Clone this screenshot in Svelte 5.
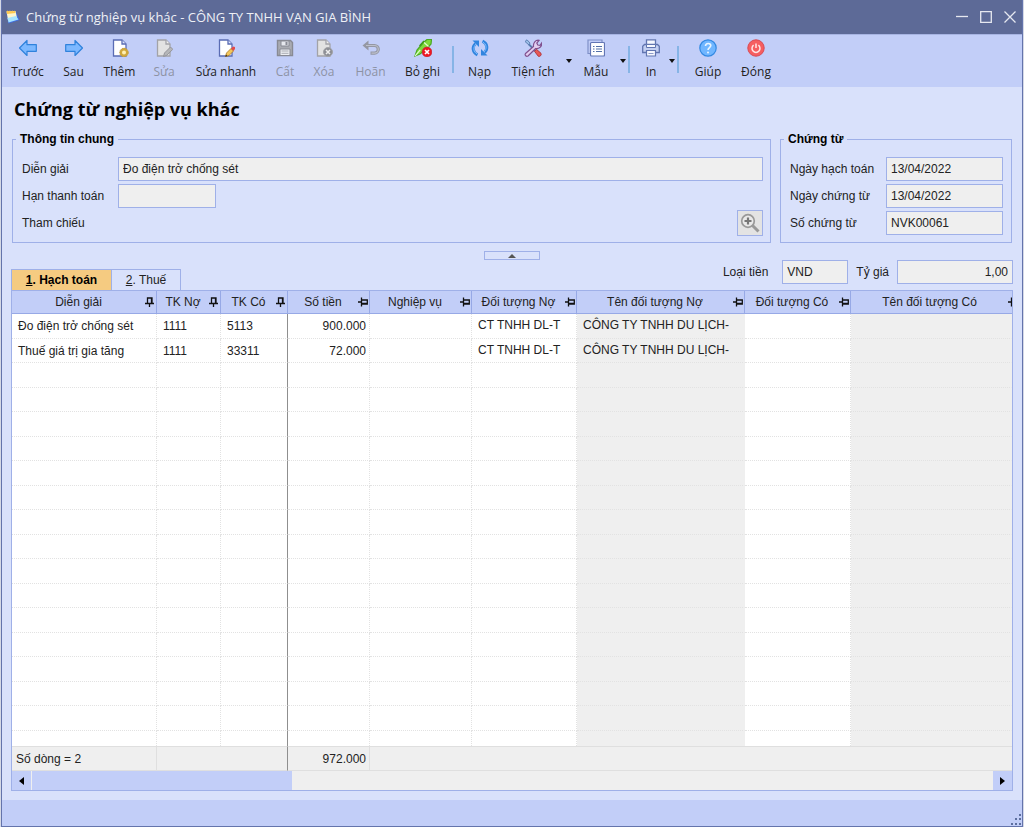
<script>
  const tools = [
    { icon: 'prev', label: 'Trước', width: 51 },
    { icon: 'next', label: 'Sau', width: 41 },
    { icon: 'add', label: 'Thêm', width: 51 },
    { icon: 'edit', label: 'Sửa', width: 38, disabled: true },
    { icon: 'quick', label: 'Sửa nhanh', width: 86 },
    { icon: 'save', label: 'Cất', width: 32, disabled: true },
    { icon: 'remove', label: 'Xóa', width: 46, disabled: true },
    { icon: 'undo', label: 'Hoãn', width: 47, disabled: true },
    { icon: 'unpost', label: 'Bỏ ghi', width: 57, divider: true },
    { icon: 'reload', label: 'Nạp', width: 43 },
    { icon: 'utility', label: 'Tiện ích', width: 64, menu: true },
    { icon: 'form', label: 'Mẫu', width: 46, menu: true, divider: true },
    { icon: 'print', label: 'In', width: 34, menu: true, divider: true },
    { icon: 'help', label: 'Giúp', width: 50 },
    { icon: 'close', label: 'Đóng', width: 46 }
  ];

  const columns = [
    { title: 'Diễn giải', width: 145, pinned: true },
    { title: 'TK Nợ', width: 64, pinned: true },
    { title: 'TK Có', width: 67, pinned: true },
    { title: 'Số tiền', width: 82 },
    { title: 'Nghiệp vụ', width: 102 },
    { title: 'Đối tượng Nợ', width: 105 },
    { title: 'Tên đối tượng Nợ', width: 168, locked: true },
    { title: 'Đối tượng Có', width: 106 },
    { title: 'Tên đối tượng Có', locked: true }
  ];

  const entries = [
    ['Đo điện trở chống sét', '1111', '5113', '900.000', '', 'CT TNHH DL-T', 'CÔNG TY TNHH DU LỊCH-', '', ''],
    ['Thuế giá trị gia tăng', '1111', '33311', '72.000', '', 'CT TNHH DL-T', 'CÔNG TY TNHH DU LỊCH-', '', '']
  ];
  const blank = columns.map(() => '');
  const rows = [...entries, ...Array.from({ length: 16 }, () => blank)];

  let tab = $state(1);
  let expanded = $state(true);
</script>

{#snippet page()}
  <path d="M2.500 1h8.500l4 4v12h-12.500z" fill="#fff" stroke="#5a6cb4" stroke-width="1.300" />
  <path d="M11 1v4h4" fill="#dfe7fb" stroke="#5a6cb4" stroke-width="1.300" />
{/snippet}

{#snippet greyPage()}
  <path d="M2.500 1h8.500l4 4v12h-12.500z" fill="#e2e2e2" stroke="#a2a3a8" stroke-width="1.300" />
  <path d="M11 1v4h4" fill="#efefef" stroke="#a2a3a8" stroke-width="1.300" />
{/snippet}

{#snippet glyph(name)}
  <svg class="glyph" viewBox="0 0 18 18" fill="none" aria-hidden="true">
    {#if name === 'prev'}
      <path d="M.5 9L8 1.500v4.200h9.300v6.600H8v4.200z" fill="#7db8ff" stroke="#2f82dc" stroke-width="1.200" stroke-linejoin="round" />
    {:else if name === 'next'}
      <path d="M17.500 9L10 1.500v4.200H.7v6.600H10v4.200z" fill="#7db8ff" stroke="#2f82dc" stroke-width="1.200" stroke-linejoin="round" />
    {:else if name === 'add'}
      {@render page()}
      <circle cx="13" cy="13.500" r="3.200" fill="#fff0b4" stroke="#d0a83c" stroke-width="2.400" />
      <circle cx="13" cy="13.500" r="4.300" stroke="#c0983a" stroke-width=".8" stroke-dasharray="1.500 1" />
    {:else if name === 'edit'}
      {@render greyPage()}
      <path d="M8.500 17.500l1-3.500 6-6 2.300 2.300-6 6z" fill="#b5b6b8" stroke="#94959a" />
    {:else if name === 'quick'}
      {@render page()}
      <path d="M8.500 17.500l1-3.500 4.500-4.500 2.500 2.500-4.500 4.500z" fill="#f3c65a" stroke="#a87724" stroke-width=".8" />
      <path d="M14 9.500l1.500-1.500a1.600 1.600 0 0 1 2.300 2.300L16.500 12z" fill="#e34b4b" />
      <path d="M8.300 17.700l.7-2.200 1.500 1.500z" fill="#3b3020" />
    {:else if name === 'save'}
      <path d="M1.500 1.500h13l2 2v13h-15z" fill="#a9abb2" stroke="#888a94" stroke-width="1.400" />
      <path d="M5 2h8v5H5z" fill="#e6e8ee" stroke="#888a94" />
      <path d="M9.500 3h2v3h-2z" fill="#888a94" />
      <path d="M4 10h10v6.500H4z" fill="#eceef2" stroke="#888a94" />
      <path d="M5.500 12h7M5.500 14.300h7" stroke="#a9abb2" />
    {:else if name === 'remove'}
      {@render greyPage()}
      <circle cx="13" cy="13" r="4.500" fill="#8d8f95" stroke="#a2a3a8" />
      <path d="M11 11l4 4M15 11l-4 4" stroke="#eee" stroke-width="1.500" />
    {:else if name === 'undo'}
      <path d="M5 6.500h7.500a3.800 3.800 0 0 1 0 7.600H8.500" stroke="#9497a3" stroke-width="3.200" />
      <path d="M6.500 1.500L.5 6.500l6 5z" fill="#9497a3" />
      <path d="M4 6.500h8.500a3.800 3.800 0 0 1 0 7.600H9.500" stroke="#bcc0cc" stroke-width="1.200" />
    {:else if name === 'unpost'}
      <path d="M1 17l2-6L9.500 3.500 13 .5h4.500l-.5 4.500-4 4.500L6 15z" fill="#7fda3c" stroke="#4aa922" stroke-width="1.200" />
      <path d="M1.200 16.800l5-6M10 3.500l4.500 4" stroke="#e0ffcc" stroke-width="1.200" />
      <path d="M5.500 7L10 2" stroke="#3d9d1c" stroke-width="1.400" />
      <circle cx="13" cy="13" r="4.900" fill="#ee1822" stroke="#bd2935" stroke-width=".6" />
      <path d="M11 11l4 4M15 11l-4 4" stroke="#fff" stroke-width="1.700" />
    {:else if name === 'reload'}
      <path d="M6.500 15.800C1.500 13.500.8 8 4.500 4.500" stroke="#3185df" stroke-width="3" />
      <path d="M1.500 1.500h6.500v6.500z" fill="#3185df" />
      <path d="M11.500 2.200c5 2.300 5.700 7.800 2 11.300" stroke="#3185df" stroke-width="3" />
      <path d="M16.500 16.500H10V10z" fill="#3185df" />
      <path d="M6.300 15C2.300 13 1.700 8.500 5 5M11.700 3c4 2 4.600 6.500 1.300 10" stroke="#7fbcff" stroke-width="1" />
    {:else if name === 'utility'}
      <path d="M4.500 5l7 7" stroke="#587aae" stroke-width="1.800" />
      <path d="M1 2.500L3 .8 6 4 5 6z" fill="#9bbde5" stroke="#587aae" stroke-width=".9" />
      <path d="M1.500 14.500L9.500 7.500C9 4 11.500.7 15 1.300L12.800 4l1 2 2.200.3 1.700-2.300c.5 3.500-2.700 6-6 5.500L4 17a1.800 1.800 0 0 1-2.500-2.500z" fill="#e2cef0" stroke="#80508f" stroke-width="1.200" />
      <path d="M10.500 12.300l2-2 4.500 4a2.200 2.200 0 0 1-2.700 3z" fill="#e85855" stroke="#ac3039" stroke-width=".9" />
    {:else if name === 'form'}
      <path d="M3.500 14.500H1V1h14v2.500" stroke="#7f90c8" stroke-width="1.200" />
      <rect x="3.500" y="3.500" width="14" height="13.500" rx="1" fill="#fff" stroke="#6376b4" stroke-width="1.200" />
      <path d="M9 7.500h6M9 10h6M9 12.500h6" stroke="#5370a8" />
      <path d="M6 7.500h1.500M6 10h1.500M6 12.500h1.500" stroke="#5370a8" stroke-width="1.200" />
    {:else if name === 'print'}
      <path d="M4.500 6V.8h9V6" fill="#f6f8ff" stroke="#6175b0" stroke-width="1.300" />
      <path d="M2.500 5.500h13l1.800 1.800v6.200H.7V7.300z" fill="#c3cff2" stroke="#6175b0" stroke-width="1.300" />
      <path d="M4.500 5.500h9v3h-9z" fill="#f6f8ff" stroke="#6175b0" />
      <path d="M4.500 11.500h9V17h-9z" fill="#f6f8ff" stroke="#6175b0" stroke-width="1.200" />
      <path d="M6.500 14.500h5" stroke="#8c9bc8" />
    {:else if name === 'help'}
      <circle cx="9" cy="9" r="8.200" fill="#70b6ff" stroke="#3389e2" stroke-width="1.200" />
      <path d="M6.500 7c0-3.300 5.300-3.300 5.300-.4C11.800 8.500 9 8.700 9 11" stroke="#e9f5ff" stroke-width="1.600" />
      <circle cx="9" cy="13.500" r="1" fill="#e9f5ff" />
    {:else}
      <circle cx="9" cy="9" r="8.200" fill="#f65e60" stroke="#d84b55" stroke-width="1" />
      <path d="M6.600 6.200a4 4 0 1 0 4.800 0M9 4.500V9" stroke="#ffe6e6" stroke-width="1.500" />
    {/if}
  </svg>
{/snippet}

<div class="window">
  <header class="titlebar">
    <svg class="logo" viewBox="0 0 14 14" aria-hidden="true">
      <path d="M.5 3l2 10.500L13.500 10 10 2z" fill="#3f6fe8" />
      <path d="M.5 1.500L9.500 1l1.500 7-9 2z" fill="#fff6cd" />
      <path d="M.5 1.500l1-1 1 1 1.500-1 1 1 1.500-1 1 1 1.500-1 .5 2.500-8.500 1z" fill="#ffc94f" />
      <path d="M1.500 8l8.500-2 2.500 3.500-10 3z" fill="#a6e4ff" />
    </svg>
    <span class="caption">Chứng từ nghiệp vụ khác - CÔNG TY TNHH VẠN GIA BÌNH</span>
    <div class="controls">
      <button aria-label="Thu nhỏ"><svg viewBox="0 0 12 12"><path d="M0 5.500h12" /></svg></button>
      <button aria-label="Phóng to"><svg viewBox="0 0 12 12"><path d="M.7.7h10.600v10.600H.7z" /></svg></button>
      <button aria-label="Đóng cửa sổ"><svg viewBox="0 0 12 12"><path d="M.5.5l11 11M11.500.5l-11 11" /></svg></button>
    </div>
  </header>

  <nav class="toolbar">
    {#each tools as tool}
      <button class="tool" disabled={tool.disabled} style:width="{tool.width}px">
        {@render glyph(tool.icon)}
        <span>{tool.label}</span>
      </button>
      {#if tool.menu}
        <button class="drop" aria-label="{tool.label}: thêm lựa chọn"><i class="tri down"></i></button>
      {/if}
      {#if tool.divider}<i class="divider"></i>{/if}
    {/each}
  </nav>

  <main>
    <h1>Chứng từ nghiệp vụ khác</h1>

    {#if expanded}
      <div class="groups">
        <fieldset class="general">
          <legend>Thông tin chung</legend>
          <div class="fields">
            <label for="desc">Diễn giải</label>
            <input id="desc" value="Đo điện trở chống sét" readonly />
            <label for="due">Hạn thanh toán</label>
            <input id="due" class="short" value="" readonly />
            <span>Tham chiếu</span>
            <button class="lookup" aria-label="Tham chiếu">
              <svg viewBox="0 0 20 20" fill="none">
                <path d="M12 12l6.500 6.500" stroke="#999" stroke-width="3" />
                <circle cx="8" cy="8" r="6.300" fill="#e9e9e9" stroke="#999" stroke-width="1.700" />
                <path d="M8 4.500v7M4.500 8h7" stroke="#777" stroke-width="2.200" />
              </svg>
            </button>
          </div>
        </fieldset>
        <fieldset class="voucher">
          <legend>Chứng từ</legend>
          <div class="fields">
            <label for="posted">Ngày hạch toán</label>
            <input id="posted" value="13/04/2022" readonly />
            <label for="dated">Ngày chứng từ</label>
            <input id="dated" value="13/04/2022" readonly />
            <label for="number">Số chứng từ</label>
            <input id="number" value="NVK00061" readonly />
          </div>
        </fieldset>
      </div>
    {/if}

    <button class="collapse" aria-label="Thu gọn" onclick={() => (expanded = !expanded)}><i class="tri up"></i></button>

    <div class="strip">
      <div class="tabs" role="tablist">
        <button role="tab" class:active={tab === 1} aria-selected={tab === 1} onclick={() => (tab = 1)}><u>1</u>. Hạch toán</button>
        <button role="tab" class:active={tab === 2} aria-selected={tab === 2} onclick={() => (tab = 2)}><u>2</u>. Thuế</button>
      </div>
      <div class="currency">
        <label for="currency">Loại tiền</label>
        <input id="currency" class="code" value="VND" readonly />
        <label for="rate">Tỷ giá</label>
        <input id="rate" class="rate" value="1,00" readonly />
      </div>
    </div>

    <div class="grid">
      <table>
        <colgroup>
          {#each columns as column}
            <col style:width={column.width ? `${column.width}px` : 'auto'} />
          {/each}
        </colgroup>
        <thead>
          <tr>
            {#each columns as column}
              <th scope="col">
                <div class="head">
                  <span>{column.title}</span>
                  {#if column.pinned}
                    <svg class="pin" viewBox="0 0 10 10"><path d="M2.500 6V1h4.500v5M0 6.500h9M4.500 7v3M6.500 1v5" /></svg>
                  {:else}
                    <svg class="pin" viewBox="0 0 10 10"><path d="M4 3h5.300v4H4M3.500 .5v9M0 5h3M4 6.500h5" /></svg>
                  {/if}
                </div>
              </th>
            {/each}
          </tr>
        </thead>
        <tbody>
          {#each rows as row}
            <tr>
              {#each row as cell, i}
                <td class:locked={columns[i].locked} class:frozen={i === 2} class:amount={i === 3} class:party={i > 4}>{cell}</td>
              {/each}
            </tr>
          {/each}
        </tbody>
        <tfoot>
          <tr>
            <td>Số dòng = 2</td>
            <td class="frozen" colspan="2"></td>
            <td class="amount">972.000</td>
            <td class="rest" colspan="5"></td>
          </tr>
        </tfoot>
      </table>
      <div class="scroll">
        <button aria-label="Cuộn trái"><i class="tri left"></i></button>
        <div class="thumb"></div>
        <button class="end" aria-label="Cuộn phải"><i class="tri right"></i></button>
      </div>
    </div>
  </main>

  <footer class="status">
    <svg viewBox="0 0 12 12" fill="#5d6f9f" aria-hidden="true">
      <path d="M9 0h2v2H9zM5 4h2v2H5zM9 4h2v2H9zM1 9h2v2H1zM5 9h2v2H5zM9 9h2v2H9z" />
    </svg>
  </footer>
</div>

<style>
  :global(body) {
    margin: 0;
    background: #d5d9e6;
  }
  .window, .window * {
    box-sizing: border-box;
  }
  .window {
    display: flex;
    flex-direction: column;
    min-height: 100vh;
    margin: 0 1px;
    border: 1px solid #6474ac;
    border-top: 0;
    background: #d9e1fb;
    color: #222;
    font: 12px/16px "Liberation Sans", Arial, sans-serif;
  }
  button {
    margin: 0;
    padding: 0;
    border: 0;
    background: none;
    color: inherit;
    font: inherit;
  }
  .titlebar {
    display: flex;
    align-items: center;
    gap: 6px;
    height: 34px;
    padding: 0 6px 0 4px;
    background: #5d6a97;
    color: #eef0f6;
    font-family: "Open Sans", "Noto Sans", sans-serif;
    font-size: 13px;
  }
  .logo {
    width: 14px;
    height: 14px;
  }
  .controls {
    display: flex;
    gap: 12px;
    margin-left: auto;
  }
  .controls button, .controls svg {
    display: block;
    width: 12px;
    height: 12px;
  }
  .controls svg {
    fill: none;
    stroke: #e6e8f0;
    stroke-width: 1.3;
  }
  .toolbar {
    display: flex;
    height: 53px;
    padding-top: 4px;
    background: #c2cef8;
    border-top: 1px solid #a7b4e2;
    font-family: "Open Sans", "Noto Sans", sans-serif;
  }
  .tool {
    display: flex;
    flex: none;
    flex-direction: column;
    align-items: center;
    gap: 7px;
    white-space: nowrap;
  }
  .tool:disabled {
    color: #8d92a4;
  }
  .glyph {
    width: 18px;
    height: 18px;
  }
  .drop {
    display: flex;
    justify-content: center;
    width: 8px;
    padding-top: 20px;
  }
  .divider {
    width: 2px;
    height: 27px;
    margin: 7px 4px 0 1px;
    background: #86b4e6;
  }
  .tri {
    width: 0;
    height: 0;
    border: 0 solid transparent;
  }
  .down {
    height: 4px;
    border-width: 4px 3px 0;
    border-top-color: #111;
  }
  .up {
    border-width: 0 4px 4px;
    border-bottom-color: #555;
  }
  .left {
    border-width: 4px 5px 4px 0;
    border-right-color: #000;
  }
  .right {
    border-width: 4px 0 4px 5px;
    border-left-color: #000;
  }
  main {
    display: flex;
    flex-direction: column;
    padding: 0 9px 9px;
  }
  h1 {
    margin: 0 3px;
    color: #000;
    font: bold 18px/44px "Open Sans", "Noto Sans", sans-serif;
  }
  .groups {
    display: flex;
    gap: 9px;
    padding: 0 1px;
  }
  fieldset {
    min-width: 0;
    margin: 0;
    padding: 10px 8px 7px 9px;
    border: 1px solid #9fb0e8;
  }
  legend {
    margin-left: -6px;
    padding: 0 4px;
    color: #000;
    font-weight: bold;
  }
  .general {
    flex: 1;
    padding-right: 7px;
  }
  .voucher {
    width: 232px;
  }
  .fields {
    display: grid;
    grid-template-columns: 96px 1fr;
    grid-auto-rows: 24px;
    row-gap: 3px;
    align-items: center;
  }
  input {
    width: 100%;
    height: 24px;
    padding: 0 4px;
    border: 1px solid #9fb0e8;
    border-radius: 0;
    background: #efefef;
    color: #222;
    font: inherit;
    outline: 0;
  }
  .short {
    width: 98px;
  }
  .lookup {
    justify-self: end;
    display: grid;
    place-items: center;
    width: 26px;
    height: 26px;
    border: 1px solid #9fb0e8;
    background: #e3e3e3;
  }
  .lookup svg {
    width: 20px;
    height: 20px;
  }
  .collapse {
    display: flex;
    align-items: center;
    justify-content: center;
    align-self: center;
    width: 56px;
    height: 9px;
    margin-top: 8px;
    border: 1px solid #9fb0e8;
  }
  .strip {
    display: flex;
    align-items: flex-start;
    justify-content: space-between;
    height: 30px;
  }
  .tabs {
    display: flex;
    align-self: flex-end;
  }
  .tabs button {
    width: 70px;
    height: 21px;
    border: 1px solid #9fb0e8;
    border-bottom: 0;
  }
  .tabs .active {
    width: 100px;
    border-right: 0;
    background: #f5cb81;
    color: #000;
    font-weight: bold;
  }
  .currency {
    display: flex;
    align-items: center;
    gap: 8px;
  }
  .code {
    width: 66px;
    margin-left: 6px;
  }
  .rate {
    width: 116px;
    text-align: right;
  }
  .grid {
    border: 1px solid #9fb0e8;
    background: #efefef;
  }
  table {
    width: 100%;
    table-layout: fixed;
    border-spacing: 0;
  }
  th {
    height: 23px;
    padding: 0;
    border-right: 1px solid #97a9e6;
    border-bottom: 1px solid #97a9e6;
    background: #c2cef8;
    font-weight: normal;
    overflow: hidden;
  }
  th:last-child {
    border-right: 0;
  }
  .head {
    display: flex;
    align-items: center;
    padding-right: 1px;
    white-space: nowrap;
  }
  th:last-child .head {
    margin-right: -7px;
  }
  .head span {
    flex: 1;
    text-align: center;
  }
  .pin {
    flex: none;
    width: 10px;
    height: 10px;
    fill: none;
    stroke: #111;
    stroke-width: 1.3;
  }
  td {
    padding: 0 6px;
    border-right: 1px dotted #e2e2e2;
    border-bottom: 1px dotted #e2e2e2;
    white-space: nowrap;
    overflow: hidden;
  }
  tbody td {
    height: 24px;
    background: #fff;
  }
  tbody tr:nth-child(odd) td {
    height: 25px;
  }
  tbody tr:last-child td {
    height: 15px;
    border-bottom: 0;
    line-height: 14px;
  }
  tbody .locked {
    background: #efefef;
    border-right-color: #efefef;
  }
  td.frozen {
    border-right: 1px solid #8f8f8f;
  }
  td.amount {
    padding-right: 3px;
    text-align: right;
  }
  td.party {
    padding-bottom: 2px;
  }
  tfoot td {
    height: 25px;
    padding-left: 4px;
    border: 0 solid #dfdfdf;
    border-width: 1px 1px 1px 0;
  }
  tfoot td.frozen {
    border-color: #dfdfdf #8f8f8f #dfdfdf #dfdfdf;
  }
  tfoot td.rest {
    border-right: 0;
  }
  .scroll {
    display: flex;
    height: 19px;
  }
  .scroll button {
    display: grid;
    place-items: center;
    width: 19px;
    background: #c2cef8;
  }
  .thumb {
    width: 26%;
    margin-left: 1px;
    background: #c2cef8;
  }
  .scroll .end {
    margin-left: auto;
  }
  .status {
    display: flex;
    flex: 1;
    align-items: flex-end;
    justify-content: flex-end;
    min-height: 26px;
    background: #c2cef8;
  }
  .status svg {
    width: 12px;
    height: 12px;
  }
</style>
